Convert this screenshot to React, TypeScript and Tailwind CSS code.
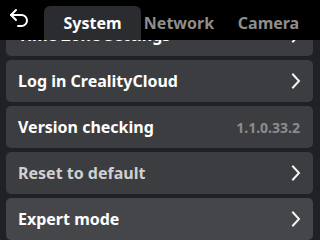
import React from "react";

const Chevron = () => (
  <svg width="10" height="16" viewBox="0 0 10 16" fill="none" className="shrink-0">
    <path d="M2 1.5 8 8l-6 6.5" stroke="#f2f2f2" strokeWidth="2" strokeLinecap="square" strokeLinejoin="miter" />
  </svg>
);

const BackIcon = () => (
  <svg width="24" height="24" viewBox="0 0 24 24" fill="none" stroke="#ffffff" strokeWidth="2" strokeLinecap="round" strokeLinejoin="round">
    <path d="M9 14 4 9l5-5" />
    <path d="M4 9h10.5a5.5 5.5 0 0 1 5.5 5.5a5.5 5.5 0 0 1-5.5 5.5H11" />
  </svg>
);

type Row = { label: string; right?: string; muted?: boolean; light?: boolean };

const rows: Row[] = [
  { label: "Time Zone Settings" },
  { label: "Log in CrealityCloud" },
  { label: "Version checking", right: "1.1.0.33.2" },
  { label: "Reset to default", muted: true },
  { label: "Expert mode", light: true },
];

export default function App() {
  return (
    <div
      className="w-[320px] h-[240px] bg-[#202124] overflow-hidden relative flex flex-col"
      style={{ fontFamily: '"Noto Sans", "Open Sans", sans-serif' }}
    >
      <div className="h-[40px] bg-black flex items-end shrink-0 z-10 relative">
        <div className="w-[44px] h-[40px] flex items-center justify-center pb-[4px] pr-[6px]">
          <BackIcon />
        </div>
        <div className="w-[97px] h-[34px] bg-[#2b2c2f] rounded-t-[6px] flex items-center justify-center text-white font-bold text-[16px]">
          System
        </div>
        <div className="w-[76px] h-[34px] flex items-center justify-center text-[#8e8e8e] font-bold text-[16px]">
          Network
        </div>
        <div className="flex-1 h-[34px] flex items-center justify-center text-[#8e8e8e] font-bold text-[16px]">
          Camera
        </div>
      </div>
      <div className="flex-1 overflow-hidden">
        <div className="mt-[-26px] pl-[6px] pr-[7px] flex flex-col gap-[4px]">
          {rows.map((r) => (
            <div
              key={r.label}
              className={`h-[42px] rounded-[5px] flex items-center justify-between pl-[12px] pr-[12px] ${r.light ? "bg-[#45464a]" : "bg-[#3c3d41]"}`}
            >
              <span className={`font-bold text-[16px] ${r.muted ? "text-[#d0d0d0]" : "text-white"}`}>{r.label}</span>
              {r.right ? (
                <span className="font-bold text-[14px] text-[#8c8c8c] pr-[1px]">{r.right}</span>
              ) : (
                <Chevron />
              )}
            </div>
          ))}
        </div>
      </div>
    </div>
  );
}
